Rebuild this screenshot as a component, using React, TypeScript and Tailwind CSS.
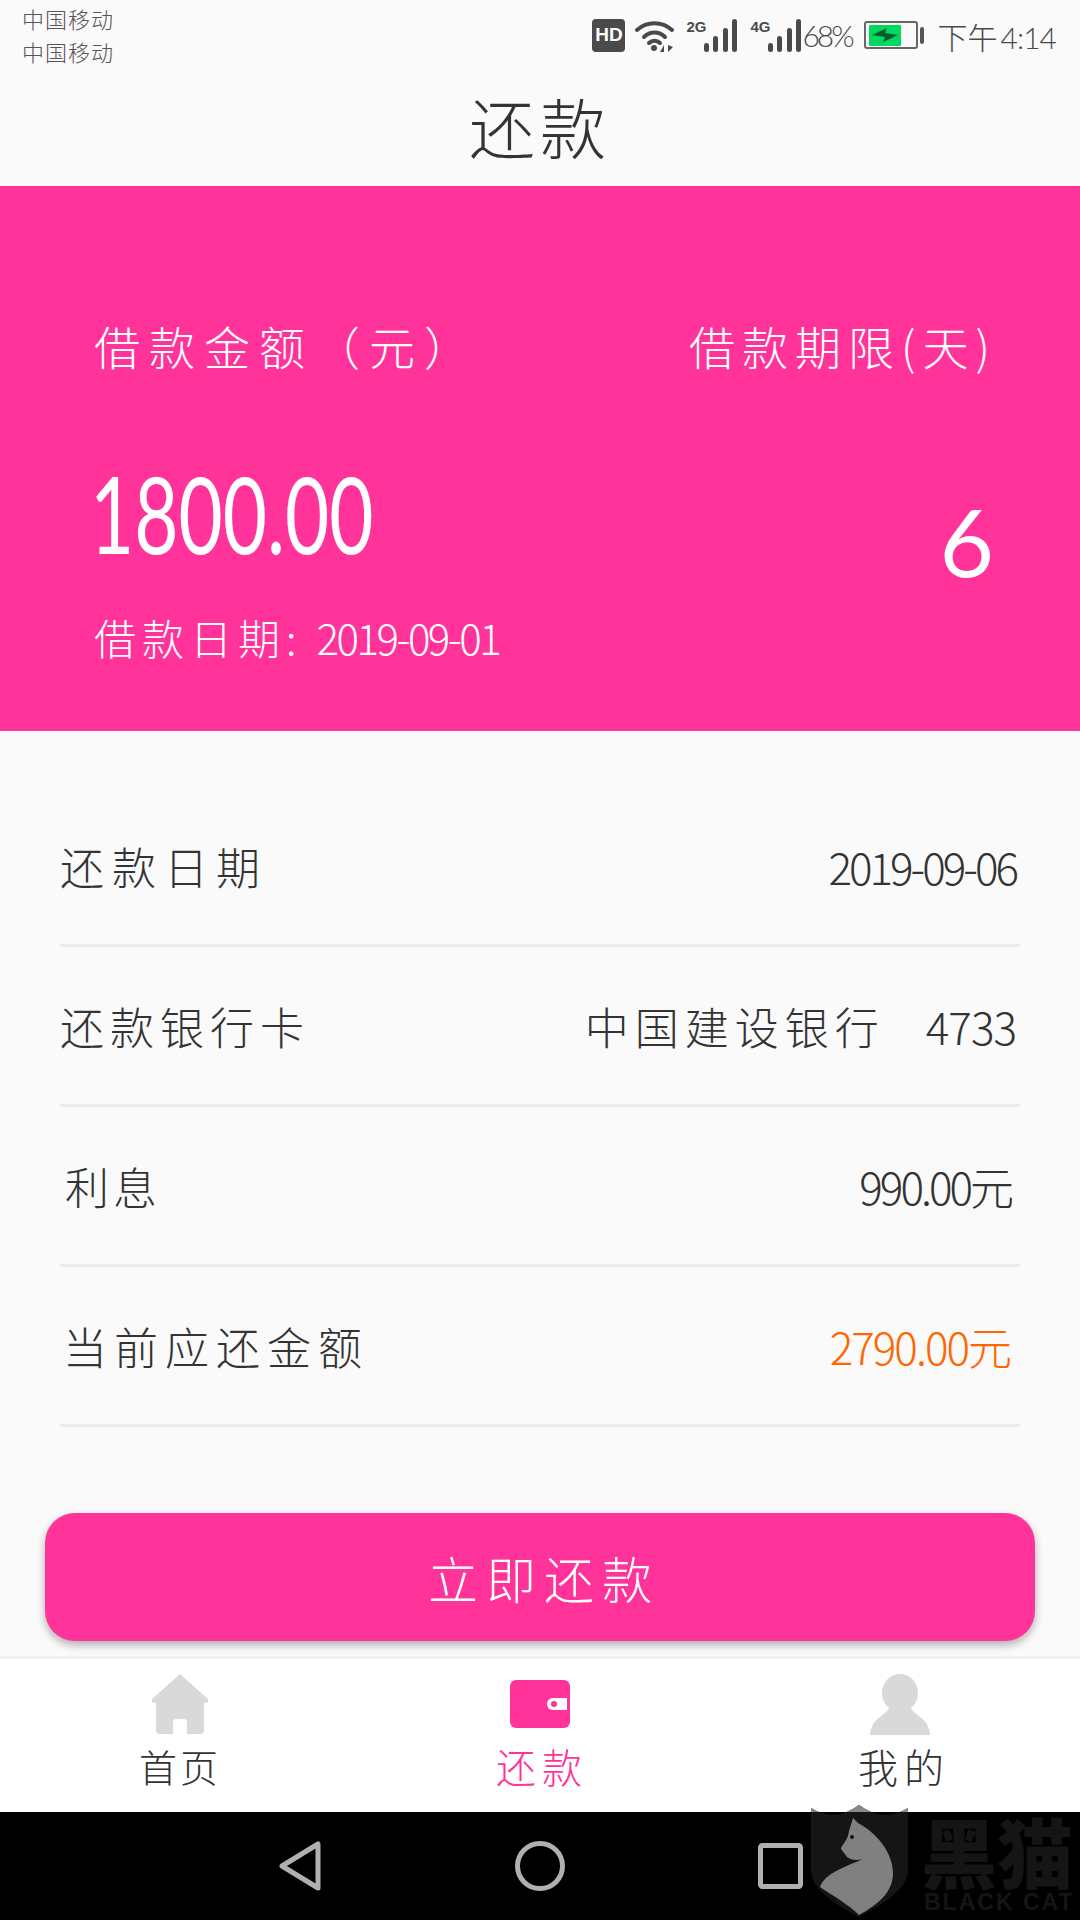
const sans = "font-['Noto_Sans_CJK_SC',sans-serif]";

function SignalBars({ label }: { label: string }) {
  return (
    <div className="flex h-[34px] items-start">
      <span className="w-[18px] font-['Liberation_Sans_Narrow','Liberation_Sans',sans-serif] text-[15px] leading-[15px] font-bold text-[#4a4a4a]">
        {label}
      </span>
      <svg width="34" height="34" viewBox="0 0 34 34" fill="#4a4a4a">
        <rect x="0" y="24" width="5" height="9" rx="2.5" />
        <rect x="9" y="17" width="5" height="16" rx="2.5" />
        <rect x="19" y="9" width="5" height="24" rx="2.5" />
        <rect x="28" y="0" width="5" height="33" rx="2.5" />
      </svg>
    </div>
  );
}

function StatusBar() {
  return (
    <div className={`flex h-[70px] justify-between pr-[24px] pl-[22px] ${sans}`}>
      <div className="flex flex-col gap-[11px] pt-[7px] text-[22px] leading-[22px] font-light tracking-[1px] text-[#555555]">
        <span>中国移动</span>
        <span>中国移动</span>
      </div>
      <div className="flex items-start pt-[19px]">
        <span className="flex h-[33px] w-[33px] items-center justify-center rounded-[4px] bg-[#4a4a4a] font-['Liberation_Sans',sans-serif] text-[19px] font-bold text-white">
          HD
        </span>
        <svg className="mt-[1px] ml-[10px]" width="40" height="33" viewBox="0 0 40 33" fill="none" stroke="#4a4a4a" strokeWidth="4" strokeLinecap="round">
          <path d="M2 10C12 1 27 1 37 10" />
          <path d="M9 17C15 11 24 11 30 17" />
          <path d="M14 23C17 20 22 20 25 23" />
          <circle cx="19" cy="28" r="3" fill="#4a4a4a" stroke="none" />
          <path d="M29 32V25L25 32ZM33 25V32L38 27Z" fill="#4a4a4a" stroke="none" />
        </svg>
        <div className="ml-[11px]">
          <SignalBars label="2G" />
        </div>
        <div className="ml-[12px]">
          <SignalBars label="4G" />
        </div>
        <span className="mt-[-2px] font-['Lato',sans-serif] text-[30px] leading-[36px] font-light tracking-[-3px] text-[#4a4a4a]">
          68%
        </span>
        <div className="mt-[2px] ml-[12px] flex items-center">
          <div className="flex h-[28px] w-[54px] items-center rounded-[3px] border-2 border-[#666666] pl-[3px]">
            <div className="flex h-[21px] w-[32px] items-center justify-center rounded-[1px] bg-[#00d95f]">
              <svg width="26" height="14" viewBox="0 0 26 14" fill="#0b5a2c">
                <path d="M0 7L15 0L13 5L26 7L11 14L13 9Z" />
              </svg>
            </div>
          </div>
          <div className="ml-[2px] h-[17px] w-[4px] rounded-[2px] bg-[#555555]" />
        </div>
        <span className="mt-[-3px] ml-[14px] text-[30px] leading-[40px] font-light text-[#4a4a4a]">
          下午<span className="ml-[3px] font-['Lato',sans-serif] tracking-[-1px]">4:14</span>
        </span>
      </div>
    </div>
  );
}

function LoanCard() {
  return (
    <div className="flex h-[545px] flex-col bg-[#ff3399] pt-[127px] pr-[83px] pl-[94px] text-white">
      <div className="flex h-[64px] items-center justify-between text-[46px] leading-[64px] font-light">
        <span className="tracking-[9px]">借款金额（元）</span>
        <span className="tracking-[7px]">借款期限(天)</span>
      </div>
      <div className="flex h-[228px] items-start justify-between">
        <span className="mt-[78px] ml-[-4px] origin-left scale-x-[0.72] font-['Lato',sans-serif] text-[106px] leading-[116px] font-normal">
          1800.00
        </span>
        <span className="mt-[106px] mr-[3px] font-['Lato',sans-serif] text-[94px] leading-[116px] font-normal">6</span>
      </div>
      <div className="flex h-[64px] items-center text-[42px] leading-[64px] font-light">
        <span className="tracking-[6px]">借款日期:</span>
        <span className="ml-[14px] tracking-[-2.5px]">2019-09-01</span>
      </div>
    </div>
  );
}

function Row({
  label,
  labelClass,
  children,
}: {
  label: string;
  labelClass?: string;
  children: React.ReactNode;
}) {
  return (
    <div className="flex h-[160px] items-center justify-between border-b-[3px] border-[#ececec] text-[44px] font-light text-[#333333]">
      <span className={labelClass}>{label}</span>
      {children}
    </div>
  );
}

function Details() {
  return (
    <div className="flex-1 pt-[56px] pr-[60px] pl-[60px]">
      <Row label="还款日期" labelClass="tracking-[8px]">
        <span className="pr-[4px] tracking-[-3px]">2019-09-06</span>
      </Row>
      <Row label="还款银行卡" labelClass="tracking-[6px]">
        <span className="pr-[4px]">
          <span className="tracking-[6px]">中国建设银行</span>
          <span className="ml-[41px] tracking-[-1px]">4733</span>
        </span>
      </Row>
      <Row label="利息" labelClass="pl-[5px] tracking-[4px]">
        <span className="pr-[9px] tracking-[-3px]">990.00元</span>
      </Row>
      <Row label="当前应还金额" labelClass="pl-[3px] tracking-[7px]">
        <span className="pr-[10px] tracking-[-2px] text-[#ff6600]">2790.00元</span>
      </Row>
    </div>
  );
}

function NavItem({
  label,
  active,
  labelClass,
  children,
}: {
  label: string;
  active?: boolean;
  labelClass?: string;
  children: React.ReactNode;
}) {
  return (
    <div className="flex flex-1 flex-col items-center pt-[12px]">
      <div className="flex h-[66px] items-center justify-center">{children}</div>
      <span className={`mt-[4px] leading-[50px] font-light ${labelClass} ${active ? "text-[#ff3399]" : "text-[#333333]"}`}>
        {label}
      </span>
    </div>
  );
}

function BottomNav() {
  return (
    <div className="flex h-[156px] border-t-[3px] border-[#f0f0f0] bg-white">
      <NavItem label="首页" labelClass="text-[38px] tracking-[3px]">
        <svg width="58" height="60" viewBox="0 0 58 60" fill="#d9d9d9">
          <path d="M29 0L57 25Q58 29 54 29H53V56Q53 60 49 60H36V48Q36 45 33 45H25Q22 45 22 48V60H9Q5 60 5 56V29H4Q0 29 1 25Z" />
        </svg>
      </NavItem>
      <NavItem label="还款" active labelClass="pl-[4px] text-[40px] tracking-[6px]">
        <svg width="60" height="48" viewBox="0 0 60 48">
          <rect width="60" height="48" rx="6" fill="#ff3399" />
          <path d="M43 18H57V30H43A6 6 0 0 1 43 18Z" fill="#ffffff" />
          <circle cx="44" cy="24" r="3" fill="#ff3399" />
        </svg>
      </NavItem>
      <NavItem label="我的" labelClass="pl-[8px] text-[40px] tracking-[6px]">
        <svg width="60" height="61" viewBox="0 0 60 61" fill="#d9d9d9">
          <ellipse cx="30" cy="19" rx="18" ry="19" />
          <path d="M20 32H40C42 38 46 39 50 43C56 47 60 54 60 61H0C0 54 4 47 10 43C14 39 18 38 20 32Z" />
        </svg>
      </NavItem>
    </div>
  );
}

function SystemBar() {
  return (
    <div className="flex h-[108px] items-start bg-black pt-[29px] pl-[279px]">
      <svg width="42" height="50" viewBox="0 0 42 50" fill="none" stroke="#b0b0b0" strokeWidth="5" strokeLinejoin="round">
        <path d="M39 3V47L3 25Z" />
      </svg>
      <svg className="ml-[194px]" width="50" height="50" viewBox="0 0 50 50" fill="none" stroke="#b0b0b0" strokeWidth="5">
        <circle cx="25" cy="25" r="22.5" />
      </svg>
      <svg className="mt-[2px] ml-[193px]" width="45" height="46" viewBox="0 0 45 46" fill="none" stroke="#b0b0b0" strokeWidth="5">
        <rect x="2.5" y="2.5" width="40" height="41" rx="2" />
      </svg>
    </div>
  );
}

function Watermark() {
  const shield = "M0 3Q24 18 48 0Q72 18 97 3V65C97 85 70 100 48 112C26 100 0 85 0 65Z";
  return (
    <div className="absolute top-[1805px] left-[811px] flex h-[113px] w-[269px]">
      <svg width="98" height="113" viewBox="0 0 98 113">
        <defs>
          <clipPath id="above-bar">
            <rect x="0" y="0" width="98" height="7" />
          </clipPath>
        </defs>
        <path d={shield} fill="#151515" />
        <path d={shield} fill="#8a8a8a" clipPath="url(#above-bar)" />
        <path d="M42 13L47 18C66 28 82 48 82 68C82 88 66 100 48 110C38 100 24 92 9 82C14 68 34 62 52 54C46 56 40 55 36 52L30 44C30 40 37 36 38 26Z" fill="#808080" />
        <circle cx="41" cy="32" r="2" fill="#151515" />
      </svg>
      <div className="ml-[12px] flex flex-col font-['Noto_Sans_CJK_SC',sans-serif] text-[#151515]">
        <span className="mt-[7px] text-[76px] leading-[76px] font-black">黑猫</span>
        <span className="mt-[3px] ml-[3px] font-['Liberation_Sans',sans-serif] text-[23px] leading-[22px] font-bold tracking-[2px]">BLACK CAT</span>
      </div>
    </div>
  );
}

export default function App() {
  return (
    <div className={`relative flex h-[1920px] w-[1080px] flex-col overflow-hidden bg-[#fafafa] ${sans}`}>
      <StatusBar />
      <div className="flex h-[116px] items-center justify-center pb-[6px] text-[66px] font-light tracking-[5px] text-[#333333]">还款</div>
      <LoanCard />
      <Details />
      <div className="px-[45px] pb-[15px]">
        <div className="flex h-[128px] items-center justify-center rounded-[30px] bg-[#ff3399] pl-[8px] text-[50px] font-light tracking-[8px] text-white shadow-[0_4px_8px_rgba(0,0,0,0.3)]">
          立即还款
        </div>
      </div>
      <BottomNav />
      <SystemBar />
      <Watermark />
    </div>
  );
}
